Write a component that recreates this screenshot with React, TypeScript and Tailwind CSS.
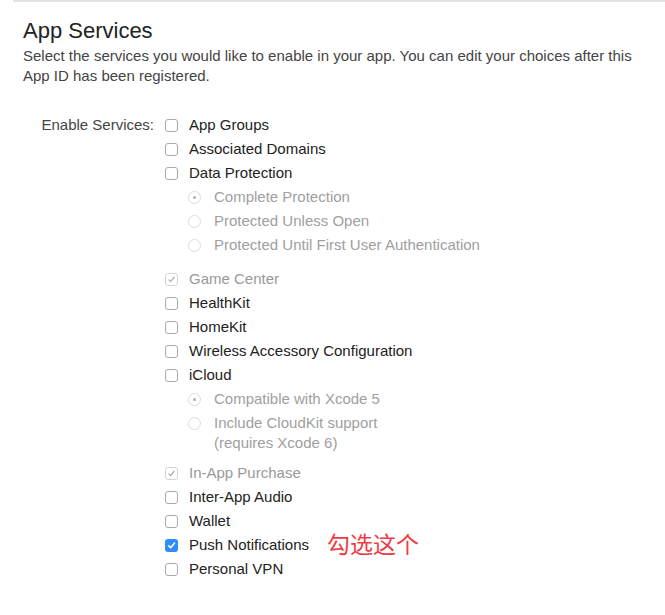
const font = { fontFamily: '"Liberation Sans", "Noto Sans CJK SC", sans-serif' };

type Item = {
  label: string;
  state: "off" | "on" | "locked";
  sub?: { label: string[]; selected: boolean }[];
  gapAfter?: string;
  note?: string;
};

const items: Item[] = [
  { label: "App Groups", state: "off" },
  { label: "Associated Domains", state: "off" },
  {
    label: "Data Protection",
    state: "off",
    sub: [
      { label: ["Complete Protection"], selected: true },
      { label: ["Protected Unless Open"], selected: false },
      { label: ["Protected Until First User Authentication"], selected: false },
    ],
    gapAfter: "mb-[10px]",
  },
  { label: "Game Center", state: "locked" },
  { label: "HealthKit", state: "off" },
  { label: "HomeKit", state: "off" },
  { label: "Wireless Accessory Configuration", state: "off" },
  {
    label: "iCloud",
    state: "off",
    sub: [
      { label: ["Compatible with Xcode 5"], selected: true },
      { label: ["Include CloudKit support", "(requires Xcode 6)"], selected: false },
    ],
    gapAfter: "mb-[6px]",
  },
  { label: "In-App Purchase", state: "locked" },
  { label: "Inter-App Audio", state: "off" },
  { label: "Wallet", state: "off" },
  { label: "Push Notifications", state: "on", note: "勾选这个" },
  { label: "Personal VPN", state: "off" },
];

const Box = ({ state }: { state: Item["state"] }): React.ReactNode => {
  if (state === "on") {
    return (
      <span className="flex h-[13px] w-[13px] items-center justify-center rounded-[3px] bg-[#2f8df5]">
        <svg width="9" height="9" viewBox="0 0 9 9">
          <path d="M1.5 4.8 L3.6 6.8 L7.6 2" fill="none" stroke="#fff" strokeWidth="1.5" strokeLinecap="round" strokeLinejoin="round" />
        </svg>
      </span>
    );
  }
  if (state === "locked") {
    return (
      <span className="flex h-[13px] w-[13px] items-center justify-center rounded-[3px] border border-[#d4d4d4] bg-white">
        <svg width="9" height="9" viewBox="0 0 9 9">
          <path d="M1.8 4.8 L3.6 6.6 L7.2 2.2" fill="none" stroke="#a8a8a8" strokeWidth="1.1" strokeLinecap="round" strokeLinejoin="round" />
        </svg>
      </span>
    );
  }
  return <span className="block h-[13px] w-[13px] rounded-[3px] border border-[#a9a9a9] bg-white" />;
};

const Radio = ({ selected }: { selected: boolean }): React.ReactNode => (
  <span className="flex h-[13px] w-[13px] items-center justify-center rounded-full border border-[#dcdcdc] bg-white">
    {selected && <span className="block h-[3px] w-[3px] rounded-full bg-[#b0b0b0]" />}
  </span>
);

export default function App() {
  return (
    <div className="min-h-[615px] w-[665px] bg-white text-[#333]" style={font}>
      <div className="ml-[13px] border-t-2 border-[#e3e3e3] pl-[10px] pt-[17px]">
        <h2 className="h-[24px] text-[22px] leading-[24px] text-[#222]">App Services</h2>
        <p className="mt-[3px] whitespace-nowrap text-[15px] leading-[20px] text-[#444]">
          Select the services you would like to enable in your app. You can edit your choices after this
          <br />
          App ID has been registered.
        </p>

        <div className="mt-[27px] flex">
          <div className="w-[131px] whitespace-nowrap text-right text-[15px] leading-[24px] text-[#444]">
            Enable Services:
          </div>
          <div className="ml-[11px] flex flex-col">
            {items.map((item) => (
              <div key={item.label} className={item.gapAfter ?? ""}>
                <div className="flex h-[24px] items-center">
                  <Box state={item.state} />
                  <span
                    className={`ml-[11px] whitespace-nowrap text-[15px] ${item.state === "locked" ? "text-[#999]" : "text-[#222]"}`}
                  >
                    {item.label}
                  </span>
                  {item.note && (
                    <span className="ml-[18px] text-[23px] leading-none text-[#f03a45]">{item.note}</span>
                  )}
                </div>
                {item.sub?.map((s) => (
                  <div key={s.label[0]} className="flex items-start py-[2px] pl-[23px]">
                    <span className="mt-[4px]">
                      <Radio selected={s.selected} />
                    </span>
                    <span className="ml-[13px] whitespace-nowrap text-[15px] leading-[20px] text-[#a0a0a0]">
                      {s.label.map((l) => (
                        <span key={l} className="block">
                          {l}
                        </span>
                      ))}
                    </span>
                  </div>
                ))}
              </div>
            ))}
          </div>
        </div>
      </div>
    </div>
  );
}
